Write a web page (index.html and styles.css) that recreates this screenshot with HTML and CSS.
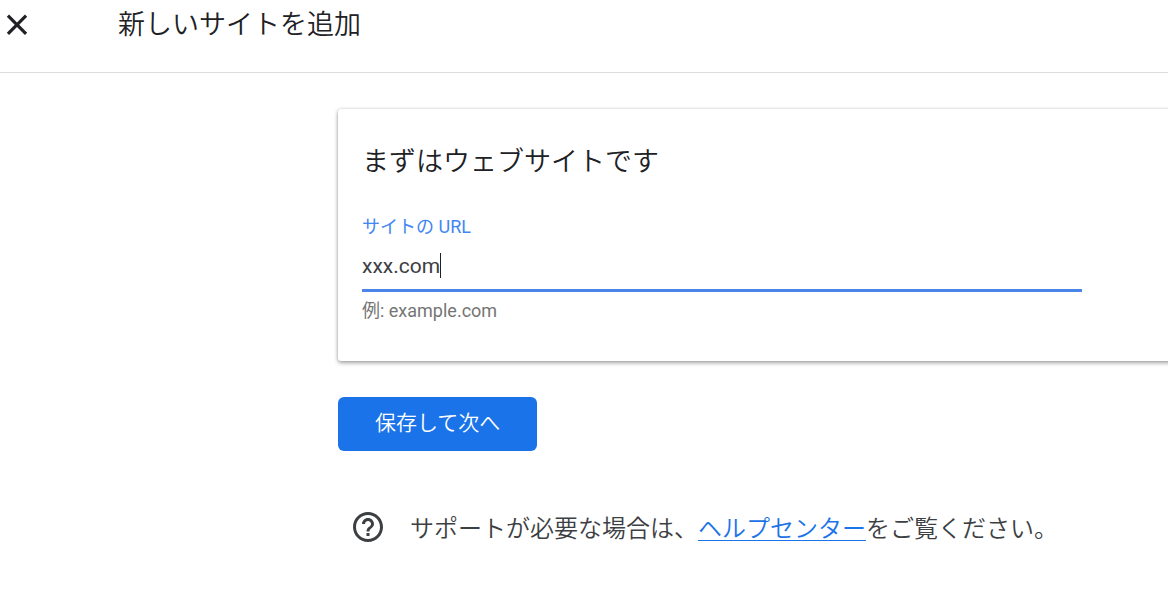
FILE: index.html
```html
<!DOCTYPE html>
<html lang="ja">
<head>
  <meta charset="UTF-8">
  <meta name="viewport" content="width=device-width, initial-scale=1">
  <title>新しいサイトを追加</title>
  <link rel="stylesheet" href="styles.css">
</head>
<body>
  <header class="header">
    <button class="close-button" type="button" aria-label="閉じる">
      <svg class="close-icon" viewBox="0 0 24 24" aria-hidden="true">
        <path d="M19.2 6.2L17.6 4.6 12 10.2 6.4 4.6 4.8 6.2 10.4 11.8 4.8 17.4 6.4 19 12 13.4 17.6 19 19.2 17.4 13.6 11.8z"/>
      </svg>
    </button>
    <h1 class="title">新しいサイトを追加</h1>
  </header>

  <main class="content">
    <form class="site-form">
      <section class="card">
        <h2 class="card-title">まずはウェブサイトです</h2>
        <div class="field">
          <label class="field-label" for="site-url">サイトの URL</label>
          <div class="field-row">
            <input class="field-input" id="site-url" type="text" value="xxx.com" aria-describedby="site-hint">
            <span class="caret"></span>
          </div>
          <p class="field-hint" id="site-hint">例: example.com</p>
        </div>
      </section>
      <button class="save-button" type="button">保存して次へ</button>
    </form>

    <div class="help">
      <svg class="help-icon" viewBox="0 0 24 24" aria-hidden="true">
        <path d="M11 18h2v-2h-2v2zm1-16C6.48 2 2 6.48 2 12s4.48 10 10 10 10-4.48 10-10S17.52 2 12 2zm0 18c-4.41 0-8-3.59-8-8s3.59-8 8-8 8 3.59 8 8-3.59 8-8 8zm0-14c-2.21 0-4 1.79-4 4h2c0-1.1.9-2 2-2s2 .9 2 2c0 2-3 1.75-3 5h2c0-2.25 3-2.5 3-5 0-2.21-1.79-4-4-4z"/>
      </svg>
      <p class="help-text">サポートが必要な場合は、<a class="help-link" href="#">ヘルプセンター</a>をご覧ください。</p>
    </div>
  </main>
</body>
</html>
```

FILE: styles.css
```css
* { box-sizing: border-box; }
body {
  margin: 0;
  background-color: #fff;
  color: #202124;
  font-family: Roboto, "Noto Sans CJK JP", sans-serif;
  overflow-x: hidden;
}
h1, h2, p { margin: 0; }
button, input { font-family: inherit; }

.header {
  display: flex;
  align-items: center;
  gap: 84px;
  padding-bottom: 22px;
  border-bottom: 1px solid #dadce0;
}
.close-button {
  display: flex;
  padding: 0;
  border: none;
  background: none;
  cursor: pointer;
}
.close-icon {
  width: 34px;
  height: 34px;
  fill: #202124;
}
.title, .card-title {
  font-size: 27px;
  font-weight: 350;
  line-height: 50px;
}

.content { padding: 36px 0 36px 338px; }
/* the card runs on past the right edge of the window */
.card {
  margin-right: -24px;
  padding: 28px 24px 36px;
  border-radius: 3px;
  background-color: #fff;
  box-shadow: 0 2px 4px rgba(0,0,0,0.34), 0 0 3px rgba(0,0,0,0.16);
}
.field {
  max-width: 720px;
  margin-top: 26px;
}
.field-label {
  display: block;
  color: #4285f4;
  font-size: 18px;
  font-weight: 400;
  line-height: 28px;
}
.field-row {
  display: flex;
  align-items: center;
  height: 51px;
  padding-top: 1px;
  border-bottom: 3px solid #4a86e8;
}
.field-input {
  field-sizing: content;
  padding: 0;
  border: none;
  outline: none;
  background: none;
  color: #3c4043;
  font-size: 21px;
  line-height: 28px;
  caret-color: transparent;
}
.caret {
  width: 1px;
  height: 25px;
  background-color: #202124;
}
.field-hint {
  margin-top: 5px;
  color: #757575;
  font-size: 18px;
  line-height: 28px;
}

.save-button {
  display: block;
  margin-top: 36px;
  padding: 11px 37px 13px;
  border: none;
  border-radius: 6px;
  background-color: #1a73e8;
  color: #fff;
  font-size: 21px;
  font-weight: 350;
  line-height: 30px;
  cursor: pointer;
}
.save-button:hover { background-color: #1765cc; }

.help {
  display: flex;
  align-items: flex-start;
  gap: 24px;
  margin-top: 58px;
  padding-left: 12px;
}
.help-icon {
  flex: none;
  width: 36px;
  height: 36px;
  fill: #3c4043;
}
.help-text {
  color: #3c4043;
  font-size: 24px;
  font-weight: 350;
  line-height: 40px;
}
.help-link {
  color: #1a73e8;
  text-decoration: underline;
  text-decoration-thickness: 1px;
  text-underline-offset: 3px;
}
```
